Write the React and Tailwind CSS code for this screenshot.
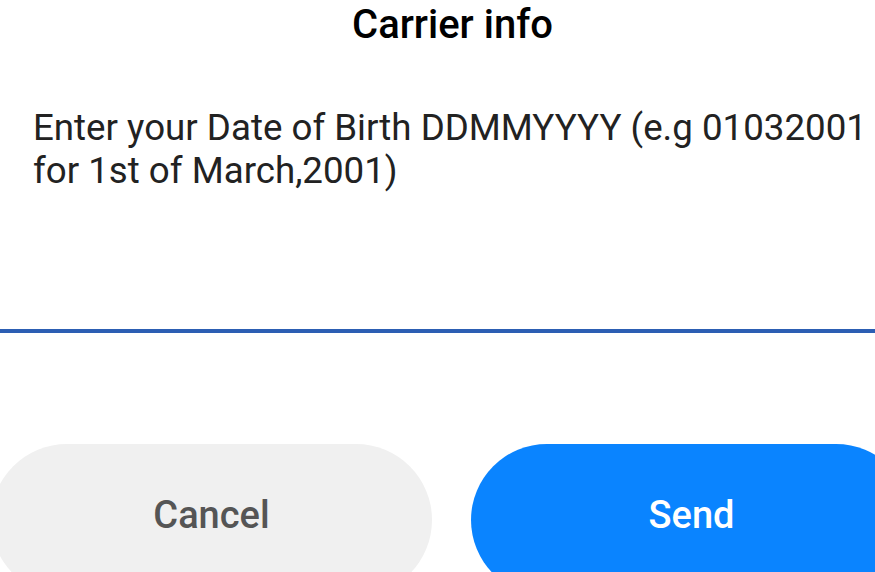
export default function App() {
  return (
    <div
      className="w-[875px] h-[572px] overflow-hidden bg-white flex flex-col"
      style={{ fontFamily: 'Roboto, "Noto Sans", Arial, sans-serif' }}
    >
      <div className="h-[48px] pt-[2px] pl-[30px] flex justify-center items-center text-[40px] leading-[46px] font-medium text-black shrink-0">
        Carrier info
      </div>
      <div className="mt-[58px] pl-[33px] text-[36.7px] leading-[43px] text-[#222] whitespace-nowrap">
        <div>Enter your Date of Birth DDMMYYYY (e.g 01032001</div>
        <div>for 1st of March,2001)</div>
      </div>
      <div className="mt-[137px] h-[4px] w-full bg-[#2c5eb3] shrink-0" />
      <div className="mt-[111px] -ml-[9px] flex gap-[39px] shrink-0">
        <div className="w-[441px] h-[152px] shrink-0 rounded-[76px] bg-[#f0f0f0] flex items-center justify-center text-[38px] font-medium text-[#555]">
          <span className="-mt-[10px]">Cancel</span>
        </div>
        <div className="w-[441px] h-[152px] shrink-0 rounded-[76px] bg-[#0a84ff] flex items-center justify-center text-[38px] font-medium text-white">
          <span className="-mt-[10px]">Send</span>
        </div>
      </div>
    </div>
  );
}
